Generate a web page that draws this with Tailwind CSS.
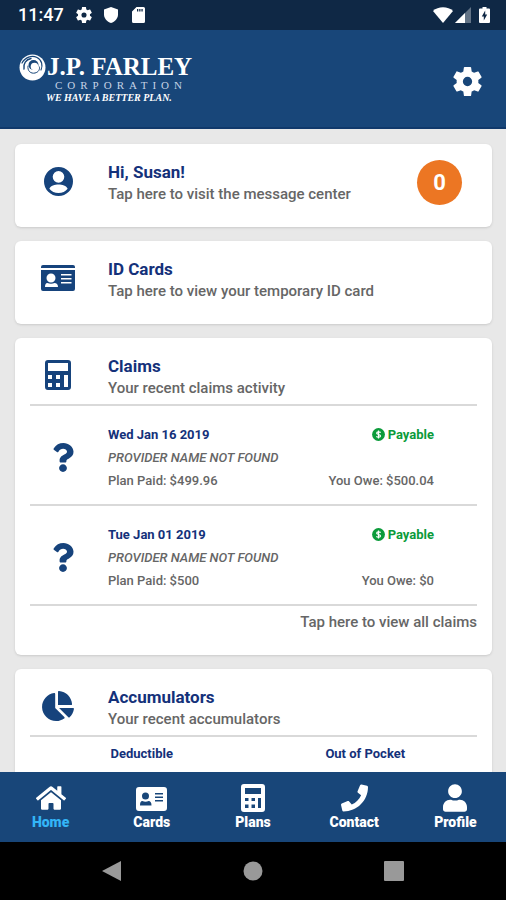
<!DOCTYPE html>
<html lang="en">
<head>
  <meta charset="UTF-8" />
  <meta name="viewport" content="width=device-width, initial-scale=1.0" />
  <title>J.P. Farley – Home</title>
  <script src="https://cdn.jsdelivr.net/npm/@tailwindcss/browser@4"></script>
</head>
<body class="flex h-screen flex-col bg-[#e8e8e8] font-['Roboto',sans-serif] text-[#666666]">

  <!-- Shared icons -->
  <svg class="hidden" aria-hidden="true">
    <symbol id="gear" viewBox="2 2 20 20"><path d="M19.43 12.98c.04-.32.07-.64.07-.98s-.03-.66-.07-.98l2.11-1.65c.19-.15.24-.42.12-.64l-2-3.46c-.12-.22-.39-.3-.61-.22l-2.49 1c-.52-.4-1.08-.73-1.69-.98l-.38-2.65C14.46 2.18 14.25 2 14 2h-4c-.25 0-.46.18-.49.42l-.38 2.65c-.61.25-1.17.59-1.69.98l-2.49-1c-.23-.09-.49 0-.61.22l-2 3.46c-.13.22-.07.49.12.64l2.11 1.65c-.04.32-.07.65-.07.98s.03.66.07.98l-2.11 1.65c-.19.15-.24.42-.12.64l2 3.46c.12.22.39.3.61.22l2.49-1c.52.4 1.08.73 1.69.98l.38 2.65c.03.24.24.42.49.42h4c.25 0 .46-.18.49-.42l.38-2.65c.61-.25 1.17-.59 1.69-.98l2.49 1c.23.09.49 0 .61-.22l2-3.46c.12-.22.07-.49-.12-.64l-2.11-1.65zM12 15.2a3.2 3.2 0 1 1 0-6.4 3.2 3.2 0 0 1 0 6.4z"/></symbol>
    <symbol id="question" viewBox="0 0 384 512"><path d="M202.021 0C122.202 0 70.503 32.703 29.914 91.026c-7.363 10.58-5.093 25.086 5.178 32.874l43.138 32.709c10.373 7.865 25.132 6.026 33.253-4.148 25.049-31.381 43.63-49.449 82.757-49.449 30.764 0 68.816 19.799 68.816 49.631 0 22.552-18.617 34.134-48.993 51.164-35.423 19.86-82.299 44.576-82.299 106.405V320c0 13.255 10.745 24 24 24h72.471c13.255 0 24-10.745 24-24v-5.773c0-42.86 125.268-44.645 125.268-160.627C377.504 66.256 286.902 0 202.021 0zM192 373.459c-38.196 0-69.271 31.075-69.271 69.271 0 38.195 31.075 69.27 69.271 69.27s69.271-31.075 69.271-69.271-31.075-69.27-69.271-69.27z"/></symbol>
    <symbol id="dollar" viewBox="0 0 14 14"><circle cx="7" cy="7" r="6.9"/><path d="M9.3 4.9C8.7 4.1 5 3.8 5 5.6c0 1.7 4.2 1.1 4.2 2.9 0 1.7-3.600 1.600-4.500.5M7 2.600v8.800" fill="none" stroke="#fff" stroke-width="1.300"/></symbol>
    <symbol id="calc" viewBox="0 0 26 30"><path fill-rule="evenodd" d="M3 0h20a3 3 0 0 1 3 3v24a3 3 0 0 1-3 3H3a3 3 0 0 1-3-3V3a3 3 0 0 1 3-3zM3 3v8h20V3zM3 15v4h4v-4zM11 15v4h4v-4zM3 23v4h4v-4zM11 23v4h4v-4zM19 15v12h4V15z"/></symbol>
    <symbol id="tab-calc" viewBox="0 0 24 28"><path fill-rule="evenodd" d="M3 0h18a3 3 0 0 1 3 3v22a3 3 0 0 1-3 3H3a3 3 0 0 1-3-3V3a3 3 0 0 1 3-3zM4 4v6h16V4zM4 14v3h3.500v-3zM10.500 14v3H14v-3zM4 20.500V24h3.500v-3.500zM10.500 20.500V24H14v-3.500zM17 14v10h3V14z"/></symbol>
  </svg>

  <!-- Status bar -->
  <div class="flex h-[30px] shrink-0 items-center bg-[#0f2845] pr-4 pl-[18px] text-white">
    <span class="text-lg font-medium">11:47</span>
    <svg class="ml-3 size-4 fill-current"><use href="#gear"/></svg>
    <svg class="ml-3 h-4 w-[14px] fill-current" viewBox="0 0 14 16"><path d="M7 0l7 2.600v5C14 11.500 11 15 7 16 3 15 0 11.500 0 7.600v-5z"/></svg>
    <svg class="ml-[14px] h-4 w-[13px] fill-current" viewBox="0 0 13 16"><path fill-rule="evenodd" d="M4.500 0H11.500A1.500 1.500 0 0 1 13 1.500v13a1.500 1.500 0 0 1-1.500 1.500h-10A1.500 1.500 0 0 1 0 14.500v-10zM5 2v2.500h1.300V2zM7.200 2v2.500h1.300V2zM9.400 2v2.500h1.300V2z"/></svg>
    <svg class="ml-auto h-4 w-5 fill-current" viewBox="0 0 20 16"><path d="M10 16L0 4C5-1 15-1 20 4z"/></svg>
    <svg class="ml-[2px] size-4 fill-current" viewBox="0 0 16 16"><path d="M16 0v16H0z" opacity=".35"/><path d="M10 6v10H0z"/></svg>
    <svg class="ml-2 h-4 w-[11px] fill-current" viewBox="0 0 11 16"><path fill-rule="evenodd" d="M3.500 0h4v1.500H10a1 1 0 0 1 1 1V15a1 1 0 0 1-1 1H1a1 1 0 0 1-1-1V2.500a1 1 0 0 1 1-1h2.500zM6.200 3.500L2.800 9.500h2v4l3.400-6h-2z"/></svg>
  </div>

  <!-- Header -->
  <header class="flex h-[99px] shrink-0 items-start justify-between border-b-2 border-[#10396b] bg-[#184679] pt-6 pr-6 pl-[19px] text-white">
    <a href="#" class="flex font-['Liberation_Serif',serif]">
      <svg class="size-[27px]" viewBox="0 0 27 27" fill="none" stroke-linecap="round">
        <circle cx="13.500" cy="13.500" r="13" fill="#fff"/>
        <circle cx="14.500" cy="11" r="5" fill="#184679"/>
        <circle cx="15.500" cy="12.500" r="3.800" fill="#fff"/>
        <path d="M3 9C6 3 13 1 18 3.500c5 2.500 6 8 4 12.500" stroke="#184679" stroke-width="1.200"/>
        <path d="M5 15C4 9.500 7 5.500 12 4.500" stroke="#184679" stroke-width="1.400"/>
        <path d="M9 12c-1 5 3 8 7 7 3.500-.8 5-3.500 4.500-6" stroke="#184679" stroke-width="1"/>
      </svg>
      <span class="flex flex-col">
        <span class="pl-px text-[25px] leading-[26px] font-bold whitespace-nowrap">J.P. FARLEY</span>
        <span class="pl-[9px] text-[11px] leading-[11px] tracking-[5px] text-[#c5d3e6]">CORPORATION</span>
        <span class="text-[10px] leading-[13px] font-bold italic">WE HAVE A BETTER PLAN.</span>
      </span>
    </a>
    <button aria-label="Settings" class="mt-[13px]"><svg class="size-[29px] fill-current"><use href="#gear"/></svg></button>
  </header>

  <!-- Cards -->
  <main class="flex min-h-0 flex-1 flex-col gap-[14px] overflow-y-auto pt-[15px] pr-[14px] pl-[15px] [scrollbar-width:none]">
    <a href="#" class="flex shrink-0 rounded-md bg-white px-[15px] pt-[17px] pb-[22px] shadow">
      <span class="flex w-[78px] shrink-0 pt-[6px] pl-[14px]">
        <svg class="size-[29px] fill-[#16437c]" viewBox="2 2 20 20"><path fill-rule="evenodd" d="M12 2a10 10 0 1 0 0 20 10 10 0 0 0 0-20zm0 2.800a4 4 0 1 1 0 8 4 4 0 0 1 0-8zM12 20c-2.600 0-4.900-1.200-6.300-3 .8-2 3.800-2.900 6.300-2.900s5.500.9 6.300 2.900c-1.400 1.800-3.700 3-6.300 3z"/></svg>
      </span>
      <span class="flex-1 leading-[22px] font-medium">
        <span class="block text-[17px] font-bold text-[#14317a]">Hi, Susan!</span>
        <span class="block text-[15px]">Tap here to visit the message center</span>
      </span>
      <span class="-mt-px mr-[15px] -mb-1 flex size-[45px] items-center justify-center rounded-full bg-[#ec7623] text-[22px] font-bold text-white">0</span>
    </a>

    <a href="#" class="flex shrink-0 rounded-md bg-white px-[15px] pt-[17px] pb-[22px] shadow">
      <span class="flex w-[78px] shrink-0 pt-[7px] pl-[11px]">
        <svg class="h-[26px] w-[34px] fill-[#16437c]" viewBox="0 0 34 26"><path fill-rule="evenodd" d="M2 0h30a2 2 0 0 1 2 2v1H0V2a2 2 0 0 1 2-2zM0 5h34v19a2 2 0 0 1-2 2H2a2 2 0 0 1-2-2zM10 8.500a4.500 4.500 0 1 0 0 9 4.500 4.500 0 0 0 0-9zM4 22h13c0-2.500-1.500-4-3.500-4-2 1-5 1-7 0C4.500 18 4 20 4 22zM20 9v1.500h10.500V9zM20 13v1.500h10.500V13zM20 17v1.500h10.500V17z"/></svg>
      </span>
      <span class="flex-1 leading-[22px] font-medium">
        <span class="block text-[17px] font-bold text-[#14317a]">ID Cards</span>
        <span class="block text-[15px]">Tap here to view your temporary ID card</span>
      </span>
    </a>

    <section class="shrink-0 rounded-md bg-white px-[15px] pt-[17px] pb-[22px] shadow">
      <div class="flex border-b-2 border-[#d9d9d9] pb-[5px]">
        <span class="flex w-[78px] shrink-0 pt-[5px] pl-[15px]">
          <svg class="h-[30px] w-[26px] fill-[#16437c]"><use href="#calc"/></svg>
        </span>
        <div class="flex-1 leading-[22px] font-medium">
          <h2 class="text-[17px] font-bold text-[#14317a]">Claims</h2>
          <p class="text-[15px]">Your recent claims activity</p>
        </div>
      </div>

      <div class="flex border-b-2 border-[#d9d9d9] pt-[17px] pr-[43px] pb-3 text-[13px] leading-[23px] font-medium">
        <span class="flex w-[78px] shrink-0 items-center pl-[22px]">
          <svg class="h-[29px] w-[22px] fill-[#16437c]"><use href="#question"/></svg>
        </span>
        <div class="flex-1">
          <p class="font-bold text-[#14317a]">Wed Jan 16 2019</p>
          <p class="italic">PROVIDER NAME NOT FOUND</p>
          <p>Plan Paid: $499.96</p>
        </div>
        <div class="flex flex-col items-end justify-between">
          <p class="flex items-center gap-[3px] font-bold text-[#0b9b3a]"><svg class="size-[13px] fill-current"><use href="#dollar"/></svg>Payable</p>
          <p>You Owe: $500.04</p>
        </div>
      </div>

      <div class="flex border-b-2 border-[#d9d9d9] pt-[17px] pr-[43px] pb-3 text-[13px] leading-[23px] font-medium">
        <span class="flex w-[78px] shrink-0 items-center pl-[22px]">
          <svg class="h-[29px] w-[22px] fill-[#16437c]"><use href="#question"/></svg>
        </span>
        <div class="flex-1">
          <p class="font-bold text-[#14317a]">Tue Jan 01 2019</p>
          <p class="italic">PROVIDER NAME NOT FOUND</p>
          <p>Plan Paid: $500</p>
        </div>
        <div class="flex flex-col items-end justify-between">
          <p class="flex items-center gap-[3px] font-bold text-[#0b9b3a]"><svg class="size-[13px] fill-current"><use href="#dollar"/></svg>Payable</p>
          <p>You Owe: $0</p>
        </div>
      </div>

      <a href="#" class="block pt-[5px] text-right text-[15px] leading-[22px] font-medium">Tap here to view all claims</a>
    </section>

    <section class="shrink-0 rounded-md bg-white px-[15px] pt-[17px] pb-[22px] shadow">
      <div class="flex border-b-2 border-[#d9d9d9] pb-[5px]">
        <span class="flex w-[78px] shrink-0 pt-[5px] pl-3">
          <svg class="h-[30px] w-8 fill-[#16437c]" viewBox="0 0 544 512"><path d="M527.79 288H290.5l158.03 158.03c6.04 6.04 15.98 6.53 22.19.68 38.7-36.46 65.32-85.61 73.13-140.86 1.34-9.46-6.51-17.85-16.06-17.85zm-15.83-64.8C503.72 103.74 408.26 8.28 288.8.04 279.68-.59 272 7.1 272 16.24V240h223.77c9.14 0 16.82-7.68 16.19-16.8zM224 288V50.71c0-9.55-8.39-17.4-17.84-16.06C86.99 51.49-4.1 155.6.14 280.37 4.5 408.51 114.83 513.59 243.03 511.98c50.4-.63 96.97-16.87 135.26-44.03 7.9-5.6 8.42-17.23 1.57-24.08L224 288z"/></svg>
        </span>
        <div class="flex-1 leading-[22px] font-medium">
          <h2 class="text-[17px] font-bold text-[#14317a]">Accumulators</h2>
          <p class="text-[15px]">Your recent accumulators</p>
        </div>
      </div>
      <div class="grid grid-cols-2 pt-[5px] text-center text-[13px] leading-[23px] font-bold text-[#14317a]">
        <p>Deductible</p>
        <p>Out of Pocket</p>
      </div>
    </section>
  </main>

  <!-- Tabs -->
  <nav class="relative grid h-[70px] shrink-0 grid-cols-5 bg-[#184679] text-sm leading-5 font-black text-white">
    <a href="#" class="flex flex-col items-center pt-3 text-[#33b5f7]">
      <svg class="h-7 w-[30px] fill-white" viewBox="0 0 576 512"><path d="M280.37 148.26L96 300.11V464a16 16 0 0 0 16 16l112.06-.29a16 16 0 0 0 15.92-16V368a16 16 0 0 1 16-16h64a16 16 0 0 1 16 16v95.64a16 16 0 0 0 16 16.05L464 480a16 16 0 0 0 16-16V300L295.67 148.26a12.19 12.19 0 0 0-15.3 0zM571.6 251.47L488 182.56V44.05a12 12 0 0 0-12-12h-56a12 12 0 0 0-12 12v72.61L318.47 43a48 48 0 0 0-61 0L4.34 251.47a12 12 0 0 0-1.600 16.900l25.500 31A12 12 0 0 0 45.150 301l235.220-193.740a12.190 12.190 0 0 1 15.300 0L530.900 301a12 12 0 0 0 16.900-1.600l25.500-31a12 12 0 0 0-1.700-16.930z"/></svg>
      Home
    </a>
    <a href="#" class="flex flex-col items-center pt-3">
      <svg class="h-7 w-[31px] fill-current" viewBox="0 0 31 28"><path fill-rule="evenodd" d="M3 3h25a3 3 0 0 1 3 3v18a3 3 0 0 1-3 3H3a3 3 0 0 1-3-3V6a3 3 0 0 1 3-3zM9.500 8.500a3.500 3.500 0 1 0 0 7 3.500 3.500 0 0 0 0-7zM4 21.500h11.500c0-3-1-4.500-3-4.500-1.500 1-4.500 1-6 0-2 0-2.500 1.500-2.500 4.500zM19 9v1.500h8V9zM19 12.500V14h8v-1.500zM19 16v1.500h8V16z"/></svg>
      Cards
    </a>
    <a href="#" class="flex flex-col items-center pt-3">
      <svg class="h-7 w-6 fill-current"><use href="#tab-calc"/></svg>
      Plans
    </a>
    <a href="#" class="flex flex-col items-center pt-3">
      <svg class="h-7 w-[27px] fill-current" viewBox="0 0 512 512"><path d="M493.4 24.6l-104-24c-11.3-2.6-22.9 3.3-27.5 13.9l-48 112c-4.2 9.8-1.4 21.3 6.9 28l60.6 49.6c-36 76.7-98.9 140.5-177.2 177.2l-49.6-60.6c-6.8-8.3-18.2-11.1-28-6.9l-112 48C3.9 366.5-2 378.1.6 389.4l24 104C27.1 504.2 36.7 512 48 512c256.1 0 464-207.5 464-464 0-11.2-7.7-20.9-18.6-23.4z"/></svg>
      Contact
    </a>
    <a href="#" class="flex flex-col items-center pt-3">
      <svg class="h-7 w-6 fill-current" viewBox="0 0 448 512"><path d="M224 256c70.7 0 128-57.3 128-128S294.7 0 224 0 96 57.3 96 128s57.3 128 128 128zm89.6 32h-16.7c-22.2 10.2-46.9 16-72.9 16s-50.6-5.8-72.9-16h-16.7C60.2 288 0 348.2 0 422.4V464c0 26.5 21.5 48 48 48h352c26.5 0 48-21.5 48-48v-41.6c0-74.2-60.2-134.4-134.4-134.4z"/></svg>
      Profile
    </a>
  </nav>

  <!-- System buttons -->
  <div class="flex h-[58px] shrink-0 justify-center bg-black">
    <div class="grid w-5/6 grid-cols-3 place-items-center text-[#999999]">
      <button aria-label="Back"><svg class="size-5 fill-current" viewBox="0 0 20 20"><path d="M19 0v20L0 10z"/></svg></button>
      <button aria-label="Home screen"><svg class="size-5 fill-current" viewBox="0 0 20 20"><circle cx="10" cy="10" r="9.500"/></svg></button>
      <button aria-label="Recent apps"><svg class="size-5 fill-current" viewBox="0 0 20 20"><rect width="20" height="20" rx="1"/></svg></button>
    </div>
  </div>

</body>
</html>
